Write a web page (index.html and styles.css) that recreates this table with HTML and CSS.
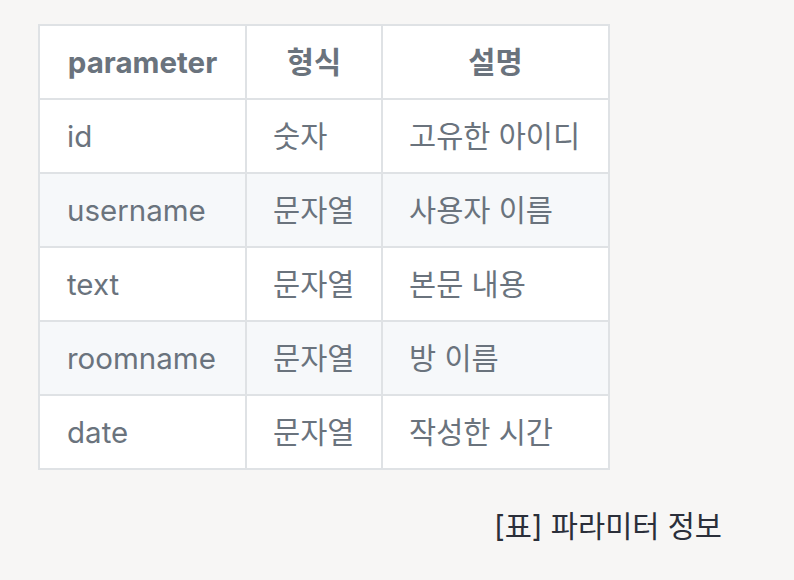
FILE: index.html
```
<!DOCTYPE html>
<html lang="ko">
<head>
<meta charset="utf-8">
<link rel="stylesheet" href="styles.css">
</head>
<body>
<div class="page">
  <table class="params">
    <thead>
      <tr><th class="c1">parameter</th><th class="c2">형식</th><th class="c3">설명</th></tr>
    </thead>
    <tbody>
      <tr><td>id</td><td>숫자</td><td>고유한 아이디</td></tr>
      <tr><td>username</td><td>문자열</td><td>사용자 이름</td></tr>
      <tr><td>text</td><td>문자열</td><td>본문 내용</td></tr>
      <tr><td>roomname</td><td>문자열</td><td>방 이름</td></tr>
      <tr><td>date</td><td>문자열</td><td>작성한 시간</td></tr>
    </tbody>
  </table>
  <p class="caption">[표] 파라미터 정보</p>
</div>
</body>
</html>
```
FILE: styles.css
```
html, body {
  margin: 0;
  padding: 0;
  background: #f7f6f5;
}
.page {
  padding: 24px 72px 0 38px;
  font-family: Inter, "Noto Sans CJK KR", sans-serif;
}
.params {
  border-collapse: collapse;
  table-layout: fixed;
  width: 570px;
  font-size: 29.5px;
  line-height: 36px;
  color: #6a737d;
}
.params th, .params td {
  box-sizing: border-box;
  border: 2px solid #dfe2e5;
  padding: 18px 0 18px 27px;
  text-align: left;
  white-space: nowrap;
}
.params td + td {
  padding-left: 26px;
}
.params th {
  font-weight: 700;
  text-align: center;
  padding: 18px 0;
  background: #fff;
}
.params tbody tr { background: #fff; }
.params tbody tr:nth-child(2n) { background: #f6f8fa; }
.c1 { width: 207px; }
.c2 { width: 136px; }
.c3 { width: 227px; }
.caption {
  margin: 38px 0 0;
  text-align: right;
  font-size: 29.5px;
  line-height: 36px;
  color: #2b2f3a;
}
```
